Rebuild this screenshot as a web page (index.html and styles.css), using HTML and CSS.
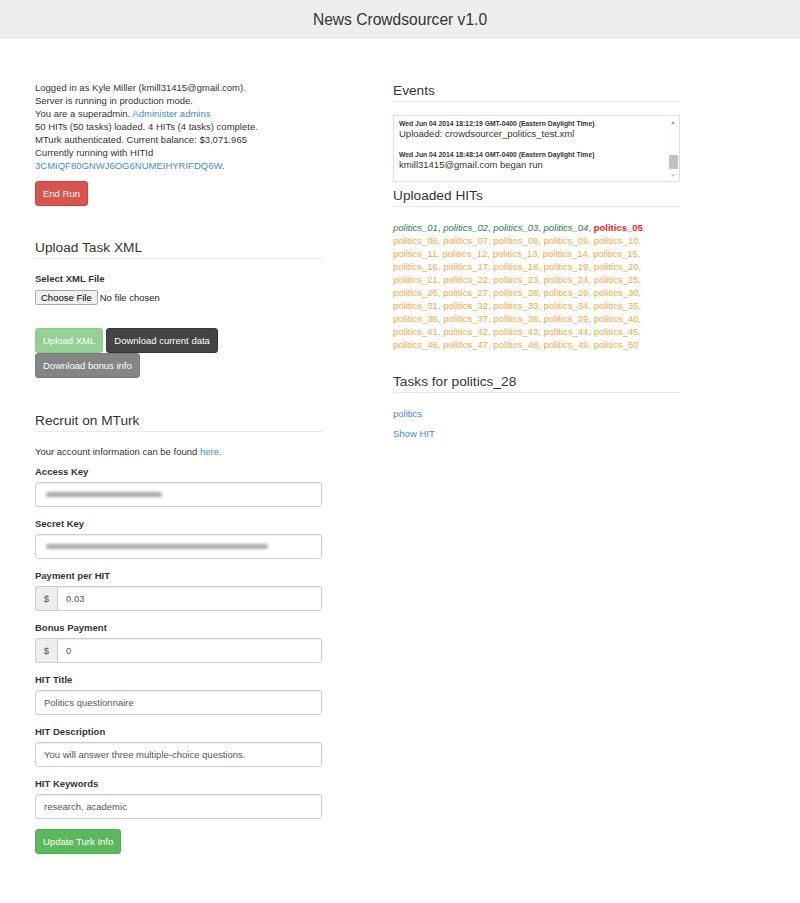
FILE: index.html
```html
<!DOCTYPE html>
<html lang="en">
<head>
<meta charset="utf-8">
<title>News Crowdsourcer v1.0</title>
<link rel="stylesheet" href="styles.css">
</head>
<body>
<header class="topbar"><h1 class="title">News Crowdsourcer v1.0</h1></header>
<main class="page">
  <section class="col col-left">
    <div class="info">
      <div>Logged in as Kyle Miller (kmill31415@gmail.com).</div>
      <div>Server is running in production mode.</div>
      <div>You are a superadmin. <a href="#">Administer admins</a></div>
      <div>50 HITs (50 tasks) loaded. 4 HITs (4 tasks) complete.</div>
      <div>MTurk authenticated. Current balance: $3,071.965</div>
      <div>Currently running with HITId</div>
      <div><a href="#">3CMIQF80GNWJ6OG6NUMEIHYRIFDQ6W</a>.</div>
    </div>
    <button class="btn btn-danger end-run">End Run</button>

    <h3 class="section-title upload-title">Upload Task XML</h3>
    <label class="field-label select-label">Select XML File</label>
    <div class="file-row"><button class="file-btn">Choose File</button><span class="file-text">No file chosen</span></div>
    <div class="btn-group">
      <button class="btn btn-success-disabled">Upload XML</button>
      <button class="btn btn-dark">Download current data</button>
      <span class="break"></span>
      <button class="btn btn-dark-disabled">Download bonus info</button>
    </div>

    <h3 class="section-title recruit-title">Recruit on MTurk</h3>
    <p class="account-note">Your account information can be found <a href="#">here.</a></p>

    <label class="field-label first-label">Access Key</label>
    <div class="input masked"><span class="blur blur-short"></span></div>

    <label class="field-label">Secret Key</label>
    <div class="input masked"><span class="blur blur-long"></span></div>

    <label class="field-label">Payment per HIT</label>
    <div class="input-group"><span class="addon">$</span><input class="input grouped" value="0.03"></div>

    <label class="field-label">Bonus Payment</label>
    <div class="input-group"><span class="addon">$</span><input class="input grouped" value="0"></div>

    <label class="field-label">HIT Title</label>
    <input class="input" value="Politics questionnaire">

    <label class="field-label">HIT Description</label>
    <input class="input" value="You will answer three multiple-choice questions.">

    <label class="field-label">HIT Keywords</label>
    <input class="input" value="research, academic">

    <button class="btn btn-success update-btn">Update Turk Info</button>
  </section>

  <section class="col col-right">
    <h3 class="section-title">Events</h3>
    <div class="events">
      <div class="events-log">
        <div class="entry">
          <div class="ts">Wed Jun 04 2014 18:12:19 GMT-0400 (Eastern Daylight Time)</div>
          <div class="msg">Uploaded: crowdsourcer_politics_test.xml</div>
        </div>
        <div class="entry">
          <div class="ts">Wed Jun 04 2014 18:48:14 GMT-0400 (Eastern Daylight Time)</div>
          <div class="msg">kmill31415@gmail.com began run</div>
        </div>
      </div>
      <div class="scrollbar">
        <span class="arrow arrow-up"></span>
        <span class="track"><span class="thumb"></span></span>
        <span class="arrow arrow-down"></span>
      </div>
    </div>

    <h3 class="section-title hits-title">Uploaded HITs</h3>
    <div class="hits">
      <a href="#" class="hit-done">politics_01</a><span class="sep-dark">,</span>
      <a href="#" class="hit-done">politics_02</a><span class="sep-dark">,</span>
      <a href="#" class="hit-done">politics_03</a><span class="sep-dark">,</span>
      <a href="#" class="hit-done">politics_04</a><span class="sep-dark">,</span>
      <a href="#" class="hit-active">politics_05</a><span class="sep-light">,</span>
      <a href="#" class="hit-pending">politics_06,</a> <a href="#" class="hit-pending">politics_07,</a> <a href="#" class="hit-pending">politics_08,</a> <a href="#" class="hit-pending">politics_09,</a> <a href="#" class="hit-pending">politics_10,</a>
      <a href="#" class="hit-pending">politics_11,</a> <a href="#" class="hit-pending">politics_12,</a> <a href="#" class="hit-pending">politics_13,</a> <a href="#" class="hit-pending">politics_14,</a> <a href="#" class="hit-pending">politics_15,</a>
      <a href="#" class="hit-pending">politics_16,</a> <a href="#" class="hit-pending">politics_17,</a> <a href="#" class="hit-pending">politics_18,</a> <a href="#" class="hit-pending">politics_19,</a> <a href="#" class="hit-pending">politics_20,</a>
      <a href="#" class="hit-pending">politics_21,</a> <a href="#" class="hit-pending">politics_22,</a> <a href="#" class="hit-pending">politics_23,</a> <a href="#" class="hit-pending">politics_24,</a> <a href="#" class="hit-pending">politics_25,</a>
      <a href="#" class="hit-pending">politics_26,</a> <a href="#" class="hit-pending">politics_27,</a> <a href="#" class="hit-pending">politics_28,</a> <a href="#" class="hit-pending">politics_29,</a> <a href="#" class="hit-pending">politics_30,</a>
      <a href="#" class="hit-pending">politics_31,</a> <a href="#" class="hit-pending">politics_32,</a> <a href="#" class="hit-pending">politics_33,</a> <a href="#" class="hit-pending">politics_34,</a> <a href="#" class="hit-pending">politics_35,</a>
      <a href="#" class="hit-pending">politics_36,</a> <a href="#" class="hit-pending">politics_37,</a> <a href="#" class="hit-pending">politics_38,</a> <a href="#" class="hit-pending">politics_39,</a> <a href="#" class="hit-pending">politics_40,</a>
      <a href="#" class="hit-pending">politics_41,</a> <a href="#" class="hit-pending">politics_42,</a> <a href="#" class="hit-pending">politics_43,</a> <a href="#" class="hit-pending">politics_44,</a> <a href="#" class="hit-pending">politics_45,</a>
      <a href="#" class="hit-pending">politics_46,</a> <a href="#" class="hit-pending">politics_47,</a> <a href="#" class="hit-pending">politics_48,</a> <a href="#" class="hit-pending">politics_49,</a> <a href="#" class="hit-pending">politics_50</a>
    </div>

    <h3 class="section-title tasks-title">Tasks for politics_28</h3>
    <a href="#" class="task-link">politics</a>
    <a href="#" class="show-hit">Show HIT</a>
  </section>
</main>
</body>
</html>
```
FILE: styles.css
```css
* { box-sizing: border-box; }

body {
  margin: 0;
  background: #fff;
  color: #333;
  font-family: "Liberation Sans", Arial, sans-serif;
  font-size: 9.5px;
  line-height: 13px;
}

a { color: #428bca; text-decoration: none; }

.topbar {
  height: 39px;
  background: #eee;
  display: flex;
  align-items: center;
  justify-content: center;
}

.title {
  margin: 0;
  font-size: 15.6px;
  font-weight: normal;
  line-height: 20px;
  color: #333;
}

.page {
  display: flex;
  align-items: flex-start;
  gap: 71px;
  padding: 42px 0 40px 35px;
}

.col { width: 287px; flex: none; }
.col-right { padding-top: 2px; }

.section-title {
  margin: 0;
  font-size: 13.7px;
  font-weight: normal;
  line-height: 16px;
  padding-bottom: 2px;
  border-bottom: 1px solid #e8e8e8;
  color: #333;
}

/* buttons */
.btn {
  display: inline-block;
  font-family: inherit;
  font-size: 9.5px;
  line-height: 13px;
  padding: 5px 7px;
  border: 1px solid transparent;
  border-radius: 3px;
  color: #fff;
  cursor: pointer;
}
.btn-danger { background: #d9534f; border-color: #d43f3a; }
.btn-success { background: #5cb85c; border-color: #4cae4c; }
.btn-success-disabled { background: #95d195; border-color: #8ccb8c; }
.btn-dark { background: #444; border-color: #363636; }
.btn-dark-disabled { background: #858585; border-color: #7c7c7c; }

.end-run { display: block; margin-top: 9px; }

.upload-title { margin-top: 34px; }

.field-label {
  display: block;
  font-weight: bold;
  margin-top: 10px;
  color: #333;
}
.select-label { margin-top: 13px; }
.first-label { margin-top: 7px; }

.file-row {
  display: flex;
  align-items: center;
  gap: 2px;
  margin-top: 5px;
  height: 15px;
}
.file-btn {
  height: 15px;
  padding: 0 5px;
  font-family: inherit;
  font-size: 9.5px;
  line-height: 13px;
  color: #000;
  background: #efefef;
  border: 1px solid #a9a9a9;
  border-radius: 2px;
}
.file-text { color: #222; }

.btn-group {
  display: flex;
  flex-wrap: wrap;
  column-gap: 3px;
  margin-top: 23px;
}
.break { flex-basis: 100%; height: 0; }

.recruit-title { margin-top: 35px; }

.account-note { margin: 13px 0 0; }

/* inputs */
.input {
  display: block;
  width: 100%;
  height: 25px;
  margin-top: 4px;
  padding: 0 8px;
  border: 1px solid #ccc;
  border-radius: 3px;
  background: #fff;
  box-shadow: inset 0 1px 1px rgba(0, 0, 0, .075);
  font-family: inherit;
  font-size: 9.5px;
  color: #555;
  outline: none;
}

.masked { display: flex; align-items: center; }
.blur {
  display: block;
  height: 5px;
  border-radius: 3px;
  background: #a9a9a9;
  filter: blur(1.8px);
}
.blur-short { width: 116px; margin-left: 2px; }
.blur-long { width: 222px; margin-left: 2px; }

.input-group { display: flex; margin-top: 4px; height: 25px; }
.addon {
  width: 22px;
  flex: none;
  display: flex;
  align-items: center;
  justify-content: center;
  background: #eee;
  border: 1px solid #ccc;
  border-right: 0;
  border-radius: 3px 0 0 3px;
  color: #555;
}
.input.grouped {
  margin-top: 0;
  flex: 1;
  border-radius: 0 3px 3px 0;
}

.update-btn { display: block; margin-top: 10px; }

/* events */
.events {
  margin-top: 13px;
  height: 67px;
  border: 1px solid #ddd;
  display: flex;
  background: #fff;
}
.events-log {
  flex: 1;
  padding: 3px 5px;
  overflow: hidden;
}
.entry + .entry { margin-top: 10px; }
.ts {
  font-size: 6.8px;
  font-weight: bold;
  line-height: 9px;
  color: #333;
  white-space: nowrap;
}
.msg { font-size: 9.5px; line-height: 12px; color: #333; }

.scrollbar {
  width: 12px;
  flex: none;
  display: flex;
  flex-direction: column;
  align-items: center;
  background: #fdfdfd;
}
.arrow {
  height: 12px;
  flex: none;
  display: flex;
  align-items: center;
  justify-content: center;
}
.arrow::before {
  content: "";
  width: 0;
  height: 0;
  border-left: 2.5px solid transparent;
  border-right: 2.5px solid transparent;
}
.arrow-up::before { border-bottom: 3px solid #a3a3a3; }
.arrow-down::before { border-top: 3px solid #c8c8c8; }
.track {
  flex: 1;
  width: 100%;
  display: flex;
  flex-direction: column;
  justify-content: flex-end;
  align-items: center;
}
.thumb { width: 9px; height: 14px; background: #c1c1c1; }

.hits-title { margin-top: 6px; }
.hits { margin-top: 14px; }
.hit-done { color: #2a8048; font-style: italic; }
.hit-active { color: #ee1c25; font-weight: bold; }
.hit-pending { color: #f6a844; }
.sep-dark { color: #555; }
.sep-light { color: #f0a070; }

.tasks-title { margin-top: 23px; }
.task-link { display: block; margin-top: 14px; }
.show-hit { display: block; margin-top: 7px; }
```
